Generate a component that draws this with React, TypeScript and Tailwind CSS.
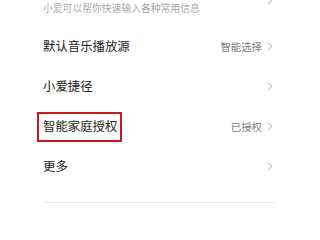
import React from 'react'

const font = { fontFamily: '"Noto Sans CJK SC", "Noto Sans", sans-serif' }

function Chevron() {
  return (
    <svg width="6" height="9" viewBox="0 0 6 9" fill="none" className="flex-shrink-0">
      <path d="M1 0.8 L4.8 4.5 L1 8.2" stroke="#c6c6c6" strokeWidth="1.1" strokeLinecap="round" strokeLinejoin="round" />
    </svg>
  )
}

function Row({ title, value, marked }: { title: string; value?: string; marked?: boolean }) {
  return (
    <div className="flex h-[40px] items-center justify-between">
      <span className="relative text-[12.4px] leading-[17px] text-[#232323]">
        {title}
        {marked && (
          <span className="absolute -left-[6.5px] -right-[5px] -top-[6.5px] -bottom-[6.5px] border-[2.5px] border-[#c7191c]" />
        )}
      </span>
      <div className="flex items-center gap-[5px]">
        {value && <span className="text-[10.4px] leading-[14px] text-[#7c7c7c]">{value}</span>}
        <Chevron />
      </div>
    </div>
  )
}

export default function App() {
  return (
    <div className="h-[222px] w-[304px] overflow-hidden bg-white pl-[43px] pr-[31px]" style={font}>
      {/* tail of the item above: its title is scrolled out of view */}
      <div className="-mt-[4.5px] flex items-start justify-between">
        <span className="mt-[5px] text-[9.8px] leading-[14px] text-[#a9a9a9]">小爱可以帮你快速输入各种常用信息</span>
        <Chevron />
      </div>
      <div className="h-[12px]" />
      <Row title="默认音乐播放源" value="智能选择" />
      <Row title="小爱捷径" />
      <Row title="智能家庭授权" value="已授权" marked />
      <Row title="更多" />
      <div className="mt-[15px] mr-[-1px] h-px bg-[#ebebeb]" />
    </div>
  )
}
